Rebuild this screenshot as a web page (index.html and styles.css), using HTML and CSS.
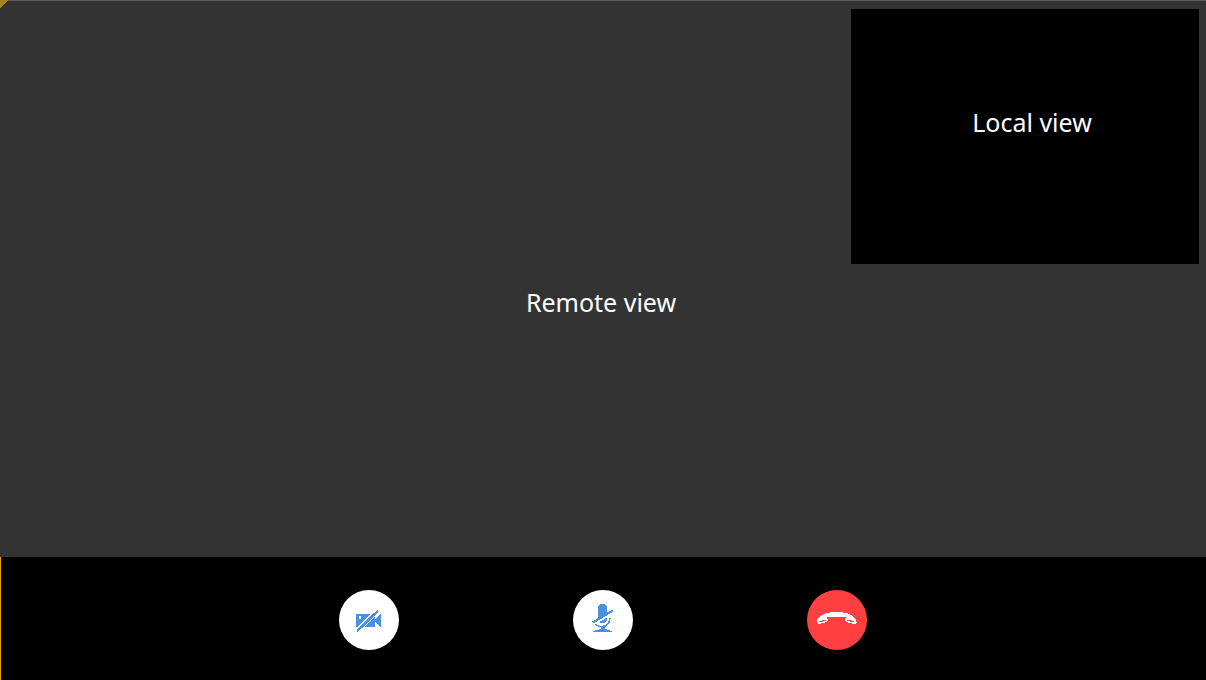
FILE: index.html
```
<!DOCTYPE html>
<html lang="en">
<head>
<meta charset="utf-8">
<title>Video call</title>
<link rel="stylesheet" href="styles.css">
</head>
<body>
<main class="call">
  <section class="remote">
    <span class="corner"></span>
    <p class="label">Remote view</p>
    <div class="local"><p class="label">Local view</p></div>
  </section>
  <footer class="controls">
    <button class="control" type="button" aria-label="Turn camera off">
      <svg viewBox="0 0 60 60" shape-rendering="crispEdges" aria-hidden="true">
        <path fill="#4a90e2" d="M17 24H36V29L42 24V37L36 32V37H17Z"/>
        <path fill="#fff" d="M20 26h2v3h-2z"/>
        <path stroke="#fff" stroke-width="5" d="M17 42L39 20"/>
        <path stroke="#4a90e2" stroke-width="2.600" d="M18 41L39 21"/>
      </svg>
    </button>
    <button class="control" type="button" aria-label="Mute microphone">
      <svg viewBox="0 0 60 60" shape-rendering="crispEdges" aria-hidden="true">
        <rect x="25" y="14" width="9" height="19" rx="4" fill="#4a90e2"/>
        <path fill="none" stroke="#4a90e2" stroke-width="1.600" d="M22 33C24 38 36 39 37 28"/>
        <path fill="#4a90e2" d="M28 36h4v3l3 1 4 1v1H20v-1l4-1 4-1z"/>
        <path stroke="#fff" stroke-width="4" d="M20 33.500L40 21.500"/>
        <path stroke="#4a90e2" stroke-width="2.200" d="M20 32.500L40 20.500"/>
      </svg>
    </button>
    <button class="control hangup" type="button" aria-label="Hang up">
      <svg viewBox="0 0 60 60" shape-rendering="crispEdges" aria-hidden="true">
        <path fill="#fff" d="M10 30C11 27 15 24 20 23L26 22H33L39 23C44 24 48 27 49 30L50 33L47 34L39 32L38 30L39 27L37 27H22L20 27L21 30L20 32L12 34L10 33Z"/>
        <path fill="#ff4040" d="M12 31h3v-1h4v1h-3v1h-4zM40 30h4v1h3v1h-4v-1h-3z"/>
      </svg>
    </button>
  </footer>
</main>
</body>
</html>
```
FILE: styles.css
```
* { box-sizing: border-box; }
body {
  margin: 0;
  background: #000;
  color: #fff;
  font-family: "Noto Sans", "Open Sans", sans-serif;
}
.call {
  display: flex;
  flex-direction: column;
  min-height: 100vh;
}
.remote {
  position: relative;
  flex: 1;
  display: flex;
  align-items: center;
  justify-content: center;
  padding: 46px 4px 0 0;
  border-top: 1px solid #5e5e5e;
  background: #333;
}
.label {
  margin: 0;
  font-size: 25px;
  line-height: 32px;
}
.corner {
  position: absolute;
  top: -1px;
  left: 0;
  width: 8px;
  height: 8px;
  background: linear-gradient(135deg, #a98419 50%, transparent 50%);
}
.local {
  position: absolute;
  top: 8px;
  right: 7px;
  width: 29%;
  max-width: 348px;
  aspect-ratio: 348 / 255;
  display: flex;
  align-items: center;
  justify-content: center;
  padding: 0 0 30px 14px;
  background: #000;
}
.controls {
  display: flex;
  align-items: center;
  justify-content: center;
  gap: 174px;
  padding: 33px 1px 30px 0;
  border-left: 1px solid #e8a010;
}
.control {
  width: 60px;
  height: 60px;
  padding: 0;
  border: 0;
  border-radius: 50%;
  background: #fff;
  cursor: pointer;
}
.control svg { display: block; }
.hangup { background: #ff4040; }
```
